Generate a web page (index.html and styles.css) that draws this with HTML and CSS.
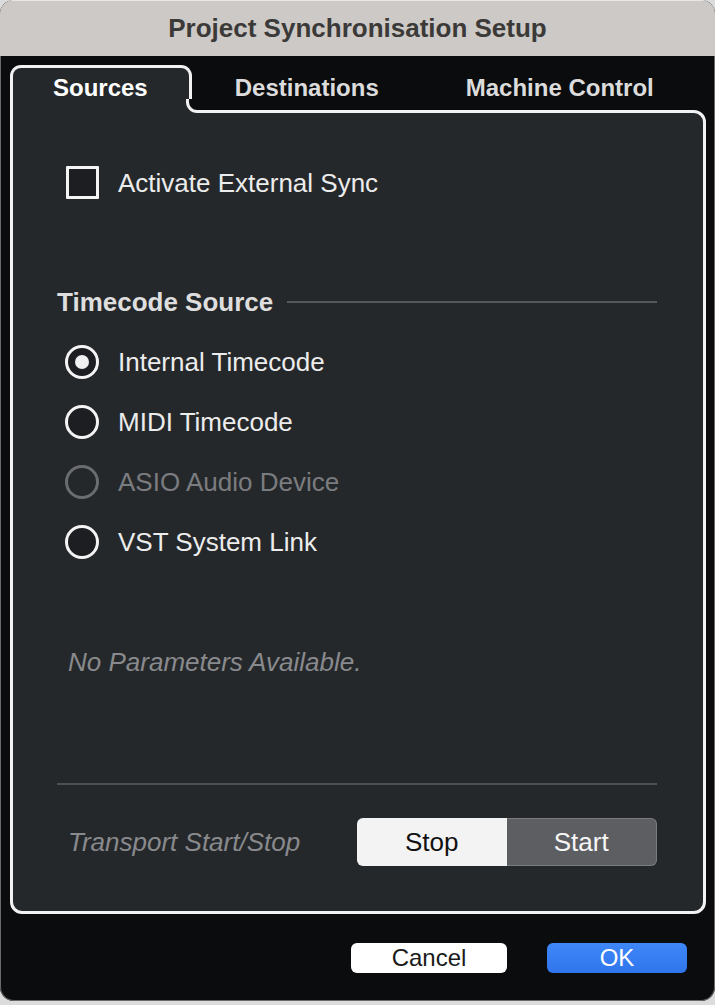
FILE: index.html
```html
<!DOCTYPE html>
<html>
<head>
<meta charset="utf-8">
<title>Project Synchronisation Setup</title>
<link rel="stylesheet" href="styles.css">
</head>
<body>
<div class="window">
  <div class="titlebar">Project Synchronisation Setup</div>
  <div class="content">
    <div class="tabs">
      <div class="tab active">Sources</div>
      <div class="tab">Destinations</div>
      <div class="tab">Machine Control</div>
    </div>
    <div class="panel">
      <div class="check-row">
        <span class="checkbox"></span>
        <span class="label">Activate External Sync</span>
      </div>
      <div class="section-head">
        <span class="section-title">Timecode Source</span>
        <span class="section-line"></span>
      </div>
      <div class="radios">
        <div class="radio-row"><span class="radio checked"></span><span class="label">Internal Timecode</span></div>
        <div class="radio-row"><span class="radio"></span><span class="label">MIDI Timecode</span></div>
        <div class="radio-row disabled"><span class="radio"></span><span class="label">ASIO Audio Device</span></div>
        <div class="radio-row"><span class="radio"></span><span class="label">VST System Link</span></div>
      </div>
      <div class="note">No Parameters Available.</div>
      <div class="separator"></div>
      <div class="transport">
        <span class="note transport-label">Transport Start/Stop</span>
        <div class="segmented">
          <span class="seg seg-on">Stop</span>
          <span class="seg seg-off">Start</span>
        </div>
      </div>
    </div>
    <div class="footer">
      <span class="btn btn-cancel">Cancel</span>
      <span class="btn btn-ok">OK</span>
    </div>
  </div>
</div>
</body>
</html>
```

FILE: styles.css
```css
html, body {
  margin: 0;
  padding: 0;
}
body {
  background: #dcdcdc;
  font-family: "Liberation Sans", Arial, sans-serif;
  width: 715px;
  height: 1005px;
  overflow: hidden;
}
.window {
  width: 715px;
  height: 1001px;
  border-radius: 14px;
  background: #0b0c0e;
  overflow: hidden;
  display: flex;
  flex-direction: column;
  box-shadow: inset 0 0 0 1px #6a6a6a;
}
.titlebar {
  height: 56px;
  flex: none;
  background: #cdc9c6;
  border-top: 1px solid #e9e7e5;
  box-sizing: border-box;
  color: #3b3a39;
  font-weight: bold;
  font-size: 26px;
  line-height: 54px;
  text-align: center;
}
.content {
  flex: 1;
  display: flex;
  flex-direction: column;
  padding: 9px 9px 0 10px;
}
.tabs {
  display: flex;
  height: 48px;
  margin-bottom: -3px;
  position: relative;
  z-index: 1;
}
.tab {
  box-sizing: border-box;
  height: 48px;
  border: 3px solid transparent;
  border-bottom: none;
  padding: 6px 41px 0 40px;
  line-height: 28px;
  font-size: 24px;
  font-weight: bold;
  color: #dcdcdc;
  border-radius: 11px 11px 0 0;
}
.tab.active {
  position: relative;
  background: #25282b;
  border-color: #f2f2f2;
  color: #ffffff;
}
.tab.active::before,
.tab.active::after {
  content: "";
  position: absolute;
  left: 100%;
  bottom: 0;
  width: 14px;
  height: 14px;
  box-sizing: border-box;
}
.tab.active::before {
  margin-left: -3px;
  background: #25282b;
}
.tab.active::after {
  margin-left: -3px;
  background: #0b0c0e;
  border-left: 3px solid #f2f2f2;
  border-bottom: 3px solid #f2f2f2;
  border-bottom-left-radius: 11px;
}
.panel {
  box-sizing: border-box;
  height: 804px;
  border: 3px solid #f2f2f2;
  border-radius: 0 12px 12px 12px;
  background: #25282b;
  padding: 0 46px 0 44px;
  display: flex;
  flex-direction: column;
}
.label {
  font-size: 26px;
  color: #ececec;
  line-height: 30px;
}
.check-row {
  display: flex;
  align-items: center;
  height: 33px;
  margin-top: 53px;
  padding-left: 9px;
}
.checkbox {
  box-sizing: border-box;
  width: 33px;
  height: 33px;
  border: 3px solid #f4f4f4;
  background: #1d1e21;
  border-radius: 1px;
  margin-right: 19px;
}
.section-head {
  display: flex;
  align-items: center;
  height: 30px;
  margin-top: 88px;
}
.section-title {
  font-size: 26px;
  font-weight: bold;
  color: #dedede;
  margin-right: 14px;
}
.section-line {
  flex: 1;
  height: 2px;
  background: #56575a;
}
.radios {
  margin-top: 15px;
  display: flex;
  flex-direction: column;
}
.radio-row {
  display: flex;
  align-items: center;
  height: 60px;
  padding-left: 8px;
}
.radio {
  box-sizing: border-box;
  width: 34px;
  height: 34px;
  border: 3px solid #f4f4f4;
  border-radius: 50%;
  background: #1d1e21;
  margin-right: 19px;
  display: flex;
  align-items: center;
  justify-content: center;
}
.radio.checked::after {
  content: "";
  width: 14px;
  height: 14px;
  border-radius: 50%;
  background: #f0f0f0;
}
.radio-row.disabled .radio {
  border-color: #6b6c6f;
  background: transparent;
}
.radio-row.disabled .label {
  color: #7b7c7f;
}
.note {
  font-size: 26px;
  font-style: italic;
  color: #898a8d;
  line-height: 30px;
  height: 30px;
  margin-top: 75px;
  padding-left: 11px;
}
.separator {
  height: 2px;
  background: #4f5053;
  margin-top: 106px;
}
.transport {
  display: flex;
  align-items: center;
  justify-content: space-between;
  margin-top: 33px;
  height: 48px;
}
.transport-label {
  margin-top: 0;
}
.segmented {
  display: flex;
  width: 300px;
  height: 48px;
}
.seg {
  flex: 1;
  box-sizing: border-box;
  display: flex;
  align-items: center;
  justify-content: center;
  font-size: 26px;
}
.seg-on {
  background: #f3f3f3;
  color: #111111;
  border-radius: 6px 0 0 6px;
}
.seg-off {
  background: #5d5e62;
  color: #f6f6f6;
  border: 1px solid #7a7b7f;
  border-left: none;
  border-radius: 0 6px 6px 0;
}
.footer {
  display: flex;
  justify-content: flex-end;
  gap: 40px;
  margin-top: 29px;
  padding-right: 19px;
}
.btn {
  height: 30px;
  line-height: 30px;
  text-align: center;
  font-size: 24px;
  border-radius: 6px;
}
.btn-cancel {
  width: 156px;
  background: #ffffff;
  color: #1a1a1a;
}
.btn-ok {
  width: 140px;
  background: linear-gradient(#3f88f8, #2f75ec);
  color: #ffffff;
}
```
